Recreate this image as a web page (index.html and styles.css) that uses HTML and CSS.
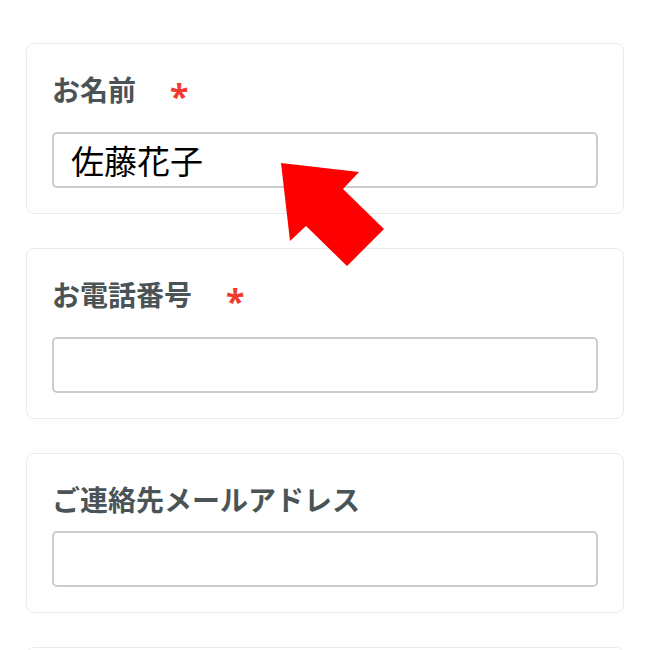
FILE: index.html
```html
<!DOCTYPE html>
<html lang="ja">
<head>
<meta charset="utf-8">
<title>フォーム</title>
<link rel="stylesheet" href="styles.css">
</head>
<body>
<div class="page">
  <form class="form">
    <div class="field">
      <label class="label label-required">お名前<span class="req">*</span></label>
      <input class="input" type="text" value="佐藤花子">
    </div>
    <div class="field">
      <label class="label label-required">お電話番号<span class="req">*</span></label>
      <input class="input" type="tel" value="">
    </div>
    <div class="field">
      <label class="label">ご連絡先メールアドレス</label>
      <input class="input" type="email" value="">
    </div>
    <div class="field">
      <input class="input" type="text" value="">
    </div>
  </form>
  <svg class="arrow" viewBox="0 0 650 650" width="650" height="650" aria-hidden="true">
    <polygon points="281,163 359,172 343,189 384,229 347,266 306,226 290,241" fill="#ff0000"/>
  </svg>
</div>
</body>
</html>
```
FILE: styles.css
```css
html, body {
  margin: 0;
  padding: 0;
  background: #ffffff;
}
.page {
  position: relative;
  width: 650px;
  height: 650px;
  overflow: hidden;
}
.form {
  display: flex;
  flex-direction: column;
  gap: 34px;
  padding: 43px 26px 0 26px;
}
.field {
  display: flex;
  flex-direction: column;
  border: 1px solid #ebebeb;
  border-radius: 8px;
  padding: 25px;
  background: #fff;
}
.label {
  font-family: "Noto Sans CJK JP", "Noto Sans", sans-serif;
  font-weight: 700;
  font-size: 28px;
  line-height: 40px;
  height: 40px;
  color: #4a5457;
  margin-bottom: 12px;
  display: flex;
  align-items: center;
}
.label-required {
  margin-bottom: 23px;
}
.req {
  font-family: "Noto Sans", "DejaVu Sans", sans-serif;
  color: #f23a2c;
  font-size: 34px;
  font-weight: 700;
  margin-left: 34px;
  line-height: 1;
  padding-top: 14px;
}
.input {
  box-sizing: border-box;
  height: 56px;
  width: 100%;
  border: 2px solid #cccccc;
  border-radius: 5px;
  padding: 0 17px;
  margin: 0;
  font-family: "Noto Sans CJK JP", "Noto Sans", sans-serif;
  font-size: 33px;
  font-weight: 400;
  color: #000;
  background: #fff;
  outline: none;
}
.arrow {
  position: absolute;
  left: 0;
  top: 0;
  pointer-events: none;
}
```
